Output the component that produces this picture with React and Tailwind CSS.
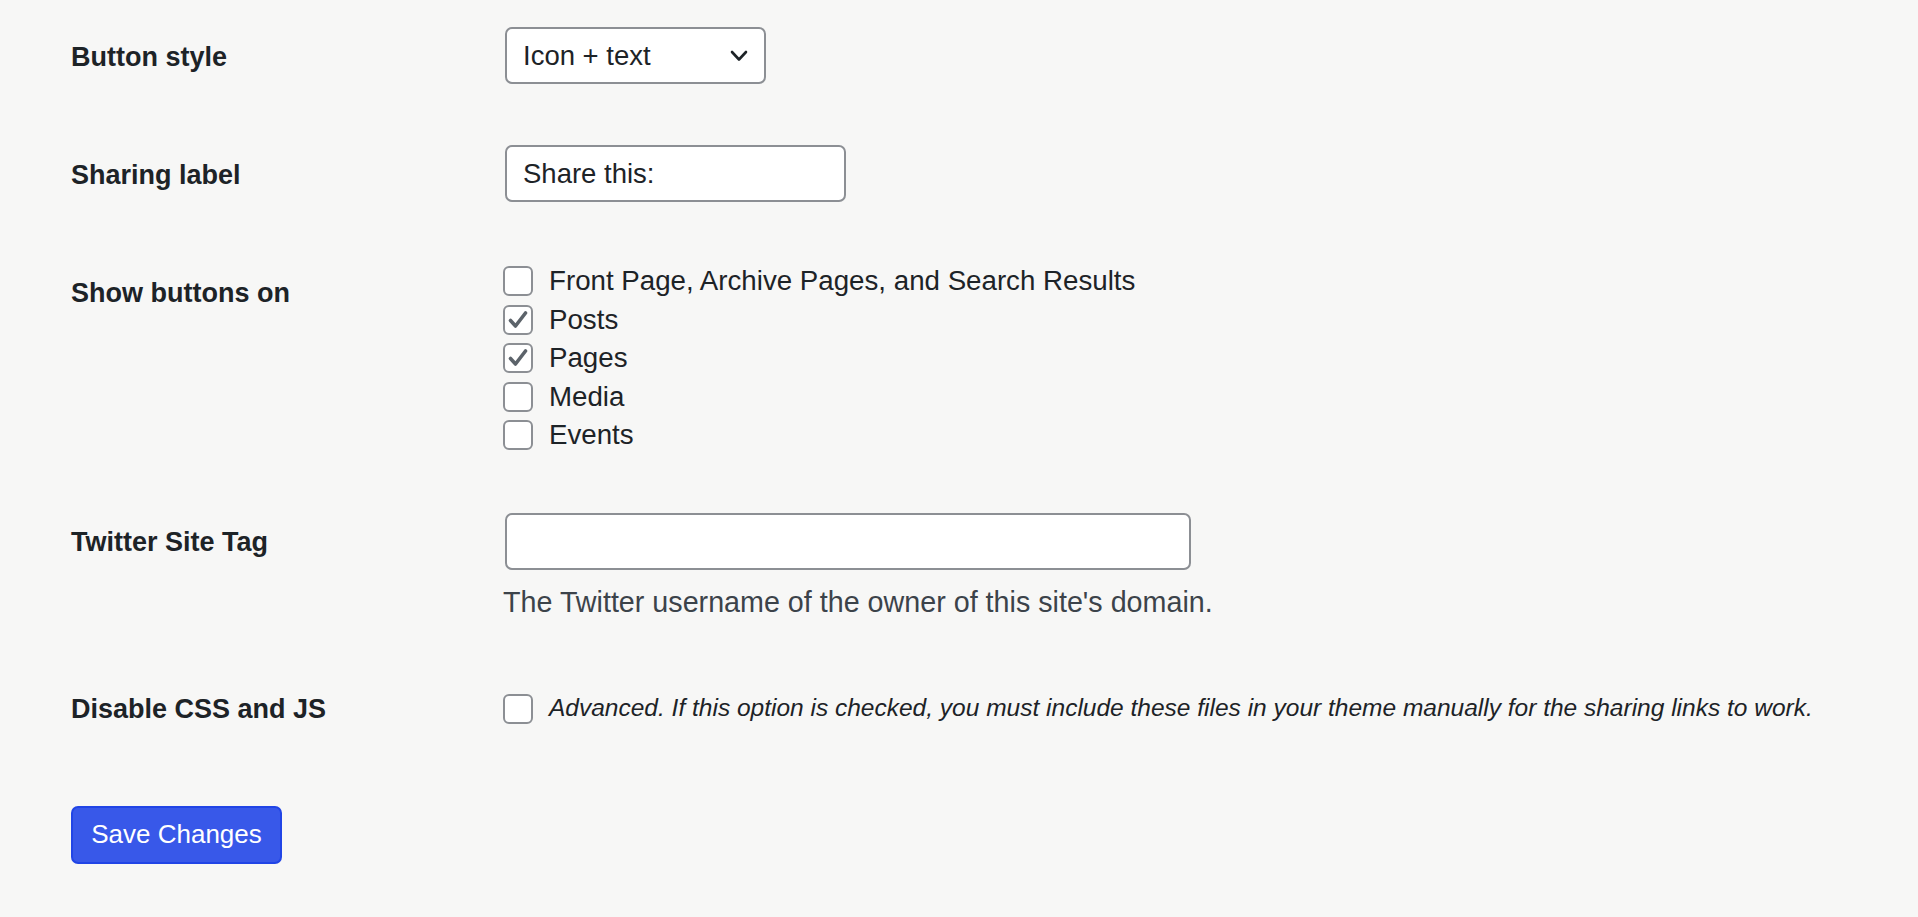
import { useState } from "react";

const font = { fontFamily: '"Liberation Sans", Arial, sans-serif' };

function Checkbox({ checked }) {
  return (
    <span className="w-[30px] h-[30px] shrink-0 rounded-[6px] border-2 border-[#8c8f94] bg-white flex items-center justify-center">
      {checked && (
        <svg width="22" height="22" viewBox="0 0 22 22" fill="none">
          <path d="M3.5 11.5 L8.5 17 L18.5 4" stroke="#5c636a" strokeWidth="3.6" strokeLinecap="round" strokeLinejoin="round" />
        </svg>
      )}
    </span>
  );
}

export default function App() {
  const [options] = useState([
    { label: "Front Page, Archive Pages, and Search Results", checked: false },
    { label: "Posts", checked: true },
    { label: "Pages", checked: true },
    { label: "Media", checked: false },
    { label: "Events", checked: false },
  ]);

  return (
    <div className="min-h-screen w-full bg-[#f7f7f6] text-[#1d2327]" style={font}>
      <div className="pl-[71px] pt-[27px]">
        {/* Button style */}
        <div className="flex items-center h-[57px]">
          <div className="w-[434px] text-[27px] font-bold pt-[3px]">Button style</div>
          <div className="w-[261px] h-[57px] rounded-[7px] border-2 border-[#8c8f94] bg-white flex items-center justify-between pl-[16px] pr-[16px]">
            <span className="text-[27.5px]">Icon + text</span>
            <svg width="18" height="12" viewBox="0 0 18 12" fill="none">
              <path d="M2 2 L9 9.5 L16 2" stroke="#1d2327" strokeWidth="2.6" strokeLinecap="round" strokeLinejoin="round" />
            </svg>
          </div>
        </div>

        {/* Sharing label */}
        <div className="flex items-center h-[57px] mt-[61px]">
          <div className="w-[434px] text-[27px] font-bold pt-[3px]">Sharing label</div>
          <div className="w-[341px] h-[57px] rounded-[7px] border-2 border-[#8c8f94] bg-white flex items-center pl-[16px]">
            <span className="text-[27.5px]">Share this:</span>
          </div>
        </div>

        {/* Show buttons on */}
        <div className="flex mt-[59px]">
          <div className="w-[434px] text-[27px] font-bold leading-[32px] pt-[16px]">Show buttons on</div>
          <div className="flex flex-col -ml-[2px] pt-[1px]">
            {options.map((o) => (
              <label key={o.label} className="flex items-center gap-[16px] h-[38.5px]">
                <Checkbox checked={o.checked} />
                <span className="text-[27.7px]">{o.label}</span>
              </label>
            ))}
          </div>
        </div>

        {/* Twitter Site Tag */}
        <div className="flex mt-[58px]">
          <div className="w-[434px] text-[27px] font-bold h-[57px] flex items-center pt-[3px]">Twitter Site Tag</div>
          <div className="flex flex-col">
            <div className="w-[686px] h-[57px] rounded-[7px] border-2 border-[#8c8f94] bg-white" />
            <p className="mt-[16px] -ml-[2px] text-[28.7px] leading-[32px] text-[#3c434a]">
              The Twitter username of the owner of this site's domain.
            </p>
          </div>
        </div>

        {/* Disable CSS and JS */}
        <div className="flex items-center h-[30px] mt-[76px]">
          <div className="w-[434px] text-[27px] font-bold pt-[1px]">Disable CSS and JS</div>
          <label className="flex items-center gap-[16px] -ml-[2px]">
            <Checkbox checked={false} />
            <span className="text-[24.5px] italic">
              Advanced. If this option is checked, you must include these files in your theme manually for the sharing links to work.
            </span>
          </label>
        </div>

        <button className="mt-[82px] w-[211px] h-[58px] rounded-[7px] bg-[#3858e9] border-2 border-[#2145e6] text-white text-[26px] flex items-center justify-center">
          Save Changes
        </button>
      </div>
    </div>
  );
}
